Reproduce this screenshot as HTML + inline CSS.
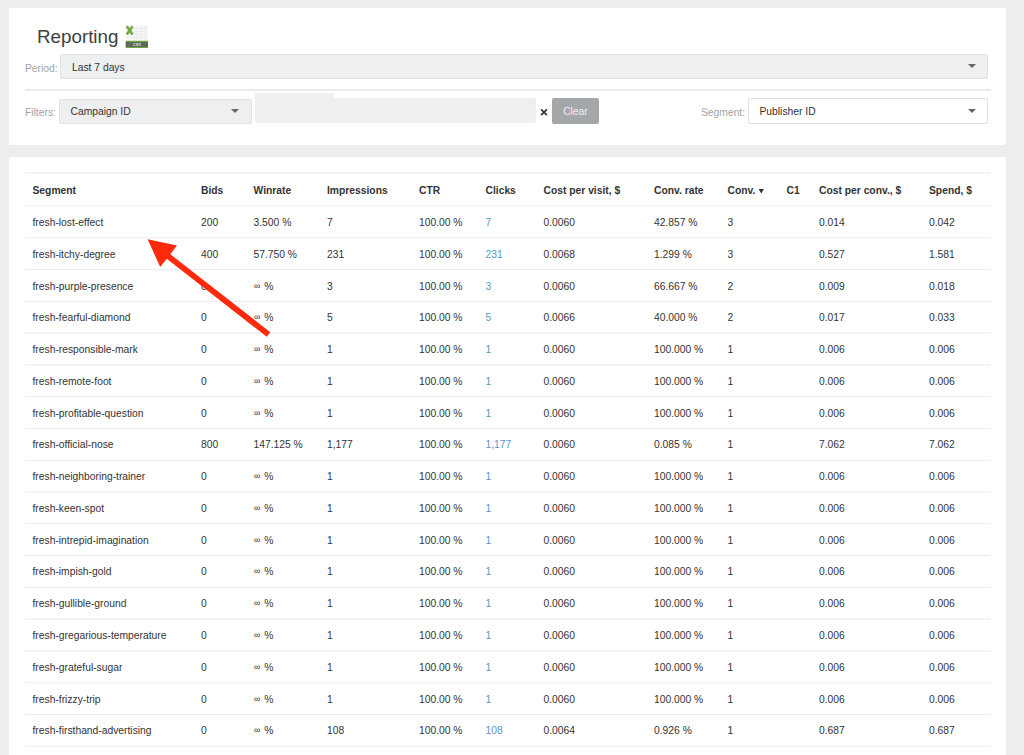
<!DOCTYPE html><html><head><meta charset="utf-8"><style>
*{margin:0;padding:0;box-sizing:border-box}
html,body{width:1024px;height:755px;overflow:hidden}
body{background:#ecedef;font-family:"Liberation Sans",sans-serif;color:#333;position:relative}
.card1{position:absolute;left:9px;top:8px;width:997px;height:137.3px;background:#fff;border-radius:1.5px}
.card2{position:absolute;left:9px;top:156.6px;width:997px;height:620px;background:#fff;border-radius:1.5px}
.title{position:absolute;left:37px;top:26px;font-size:18.8px;color:#3e4042;white-space:nowrap}
.lbl{position:absolute;font-size:10.3px;color:#a3a3a3;white-space:nowrap}
.sel{position:absolute;background:#eeeff1;border:1px solid #dfe2e5;border-radius:2px;font-size:10.3px;color:#333;white-space:nowrap}
.sel span{position:absolute;left:11px;top:0.8px}
.caret{position:absolute;width:0;height:0;border-left:4px solid transparent;border-right:4px solid transparent;border-top:4px solid #666}
.divider{position:absolute;left:25px;top:89px;width:965.5px;height:2px;background:#e9ebec}
.hl{position:absolute;left:24.6px;width:966px;height:1px;background:#eaeced}
.th{position:absolute;font-size:10.3px;font-weight:bold;color:#333;white-space:nowrap}
.td{position:absolute;font-size:10.3px;color:#333;white-space:nowrap}
.td.link{color:#5896c6}
.caret2{display:inline-block;width:0;height:0;border-left:2.7px solid transparent;border-right:2.7px solid transparent;border-top:4.4px solid #333;vertical-align:middle;margin-left:0.3px;position:relative;top:0.5px}
.inf{display:inline-block;width:7.9px;font-size:9px;padding-left:0.6px;position:relative;top:-1px}

</style></head><body>
<div class="card1"></div>
<div class="title">Reporting</div>
<svg style="position:absolute;left:125px;top:25px" width="24" height="24" viewBox="0 0 24 24">
<rect x="0.8" y="0.5" width="22.2" height="22.5" fill="#f5f6f8"/>
<path d="M9 3.5H22.5M9 6.5H22.5M9 9.5H22.5M1 12.5H22.5M12 1V15M16 1V15M20 1V15" stroke="#e2e5e8" stroke-width="0.5"/>
<rect x="0.8" y="15.8" width="22.2" height="7.2" fill="#6aa33a"/>
<rect x="0.8" y="17.2" width="22.2" height="4.6" fill="#5d615e"/>
<path d="M2 22L6 17.2M18 22L22 17.2" stroke="#6aa33a" stroke-width="0.8" opacity="0.7"/>
<text x="12" y="21" font-size="3.9" fill="#e8eee4" text-anchor="middle" font-family="Liberation Sans" font-weight="bold">CSV</text>
<path d="M1.8 1.2 L7.6 9.6 M7.6 1.2 L1.8 9.6" stroke="#72a83e" stroke-width="2.6"/>
</svg>
<div class="lbl" style="left:25px;top:62.5px">Period:</div>
<div class="sel" style="left:60px;top:54px;width:928px;height:25px;line-height:23px"><span>Last 7 days</span></div>
<div class="caret" style="left:968px;top:64px"></div>
<div class="divider"></div>
<div class="lbl" style="left:25px;top:106.8px">Filters:</div>
<div class="sel" style="left:58.5px;top:98.5px;width:193.5px;height:25px;line-height:23px"><span>Campaign ID</span></div>
<div class="caret" style="left:231px;top:109px"></div>
<div style="position:absolute;left:254.7px;top:98.2px;width:281.5px;height:25.2px;background:#eeeff1;border-radius:2px"></div>
<div style="position:absolute;left:255px;top:93px;width:79px;height:10px;background:#eeeff1"></div>
<svg style="position:absolute;left:538px;top:106px" width="12" height="12"><path d="M3.1 3.4L8.9 9.2M8.9 3.4L3.1 9.2" stroke="#333" stroke-width="1.7"/></svg>
<div style="position:absolute;left:551.7px;top:98.3px;width:47.5px;height:25.4px;background:#a4a7aa;border-radius:2px;color:#eef0f1;font-size:10.3px;line-height:27px;text-align:center">Clear</div>
<div class="lbl" style="left:701px;top:107px">Segment:</div>
<div class="sel" style="left:747.5px;top:98.2px;width:240px;height:25.6px;line-height:23px;background:#fff"><span>Publisher ID</span></div>
<div class="caret" style="left:967.6px;top:109px"></div>

<div class="card2"></div>
<svg style="position:absolute;left:0;top:0" width="1024" height="755"><g stroke="#ebedef" stroke-width="1.1"><line x1="24.6" x2="990.6" y1="172.90" y2="172.90"/><line x1="24.6" x2="990.6" y1="206.00" y2="206.00"/><line x1="24.6" x2="990.6" y1="237.78" y2="237.78"/><line x1="24.6" x2="990.6" y1="269.56" y2="269.56"/><line x1="24.6" x2="990.6" y1="301.34" y2="301.34"/><line x1="24.6" x2="990.6" y1="333.12" y2="333.12"/><line x1="24.6" x2="990.6" y1="364.90" y2="364.90"/><line x1="24.6" x2="990.6" y1="396.68" y2="396.68"/><line x1="24.6" x2="990.6" y1="428.46" y2="428.46"/><line x1="24.6" x2="990.6" y1="460.24" y2="460.24"/><line x1="24.6" x2="990.6" y1="492.02" y2="492.02"/><line x1="24.6" x2="990.6" y1="523.80" y2="523.80"/><line x1="24.6" x2="990.6" y1="555.58" y2="555.58"/><line x1="24.6" x2="990.6" y1="587.36" y2="587.36"/><line x1="24.6" x2="990.6" y1="619.14" y2="619.14"/><line x1="24.6" x2="990.6" y1="650.92" y2="650.92"/><line x1="24.6" x2="990.6" y1="682.70" y2="682.70"/><line x1="24.6" x2="990.6" y1="714.48" y2="714.48"/><line x1="24.6" x2="990.6" y1="746.26" y2="746.26"/></g></svg>
<div class="th" style="left:32.5px;top:175px;height:32px;line-height:32px">Segment</div>
<div class="th" style="left:201px;top:175px;height:32px;line-height:32px">Bids</div>
<div class="th" style="left:253.5px;top:175px;height:32px;line-height:32px">Winrate</div>
<div class="th" style="left:327px;top:175px;height:32px;line-height:32px">Impressions</div>
<div class="th" style="left:419px;top:175px;height:32px;line-height:32px">CTR</div>
<div class="th" style="left:485.5px;top:175px;height:32px;line-height:32px">Clicks</div>
<div class="th" style="left:543.5px;top:175px;height:32px;line-height:32px">Cost per visit, $</div>
<div class="th" style="left:654px;top:175px;height:32px;line-height:32px">Conv. rate</div>
<div class="th" style="left:727.5px;top:175px;height:32px;line-height:32px">Conv.</div>
<div class="th" style="left:786.5px;top:175px;height:32px;line-height:32px">C1</div>
<div class="th" style="left:819px;top:175px;height:32px;line-height:32px">Cost per conv., $</div>
<div class="th" style="left:929px;top:175px;height:32px;line-height:32px">Spend, $</div>
<div class="td" style="left:32.5px;top:207.00px;height:31.78px;line-height:31.78px">fresh-lost-effect</div>
<div class="td" style="left:201px;top:207.00px;height:31.78px;line-height:31.78px">200</div>
<div class="td" style="left:253.5px;top:207.00px;height:31.78px;line-height:31.78px">3.500 %</div>
<div class="td" style="left:327px;top:207.00px;height:31.78px;line-height:31.78px">7</div>
<div class="td" style="left:419px;top:207.00px;height:31.78px;line-height:31.78px">100.00 %</div>
<div class="td link" style="left:485.5px;top:207.00px;height:31.78px;line-height:31.78px">7</div>
<div class="td" style="left:543.5px;top:207.00px;height:31.78px;line-height:31.78px">0.0060</div>
<div class="td" style="left:654px;top:207.00px;height:31.78px;line-height:31.78px">42.857 %</div>
<div class="td" style="left:727.5px;top:207.00px;height:31.78px;line-height:31.78px">3</div>
<div class="td" style="left:786.5px;top:207.00px;height:31.78px;line-height:31.78px"></div>
<div class="td" style="left:819px;top:207.00px;height:31.78px;line-height:31.78px">0.014</div>
<div class="td" style="left:929px;top:207.00px;height:31.78px;line-height:31.78px">0.042</div>
<div class="td" style="left:32.5px;top:238.77px;height:31.78px;line-height:31.78px">fresh-itchy-degree</div>
<div class="td" style="left:201px;top:238.77px;height:31.78px;line-height:31.78px">400</div>
<div class="td" style="left:253.5px;top:238.77px;height:31.78px;line-height:31.78px">57.750 %</div>
<div class="td" style="left:327px;top:238.77px;height:31.78px;line-height:31.78px">231</div>
<div class="td" style="left:419px;top:238.77px;height:31.78px;line-height:31.78px">100.00 %</div>
<div class="td link" style="left:485.5px;top:238.77px;height:31.78px;line-height:31.78px">231</div>
<div class="td" style="left:543.5px;top:238.77px;height:31.78px;line-height:31.78px">0.0068</div>
<div class="td" style="left:654px;top:238.77px;height:31.78px;line-height:31.78px">1.299 %</div>
<div class="td" style="left:727.5px;top:238.77px;height:31.78px;line-height:31.78px">3</div>
<div class="td" style="left:786.5px;top:238.77px;height:31.78px;line-height:31.78px"></div>
<div class="td" style="left:819px;top:238.77px;height:31.78px;line-height:31.78px">0.527</div>
<div class="td" style="left:929px;top:238.77px;height:31.78px;line-height:31.78px">1.581</div>
<div class="td" style="left:32.5px;top:270.54px;height:31.78px;line-height:31.78px">fresh-purple-presence</div>
<div class="td" style="left:201px;top:270.54px;height:31.78px;line-height:31.78px">0</div>
<div class="td" style="left:253.5px;top:270.54px;height:31.78px;line-height:31.78px"><span class="inf">∞</span> %</div>
<div class="td" style="left:327px;top:270.54px;height:31.78px;line-height:31.78px">3</div>
<div class="td" style="left:419px;top:270.54px;height:31.78px;line-height:31.78px">100.00 %</div>
<div class="td link" style="left:485.5px;top:270.54px;height:31.78px;line-height:31.78px">3</div>
<div class="td" style="left:543.5px;top:270.54px;height:31.78px;line-height:31.78px">0.0060</div>
<div class="td" style="left:654px;top:270.54px;height:31.78px;line-height:31.78px">66.667 %</div>
<div class="td" style="left:727.5px;top:270.54px;height:31.78px;line-height:31.78px">2</div>
<div class="td" style="left:786.5px;top:270.54px;height:31.78px;line-height:31.78px"></div>
<div class="td" style="left:819px;top:270.54px;height:31.78px;line-height:31.78px">0.009</div>
<div class="td" style="left:929px;top:270.54px;height:31.78px;line-height:31.78px">0.018</div>
<div class="td" style="left:32.5px;top:302.31px;height:31.78px;line-height:31.78px">fresh-fearful-diamond</div>
<div class="td" style="left:201px;top:302.31px;height:31.78px;line-height:31.78px">0</div>
<div class="td" style="left:253.5px;top:302.31px;height:31.78px;line-height:31.78px"><span class="inf">∞</span> %</div>
<div class="td" style="left:327px;top:302.31px;height:31.78px;line-height:31.78px">5</div>
<div class="td" style="left:419px;top:302.31px;height:31.78px;line-height:31.78px">100.00 %</div>
<div class="td link" style="left:485.5px;top:302.31px;height:31.78px;line-height:31.78px">5</div>
<div class="td" style="left:543.5px;top:302.31px;height:31.78px;line-height:31.78px">0.0066</div>
<div class="td" style="left:654px;top:302.31px;height:31.78px;line-height:31.78px">40.000 %</div>
<div class="td" style="left:727.5px;top:302.31px;height:31.78px;line-height:31.78px">2</div>
<div class="td" style="left:786.5px;top:302.31px;height:31.78px;line-height:31.78px"></div>
<div class="td" style="left:819px;top:302.31px;height:31.78px;line-height:31.78px">0.017</div>
<div class="td" style="left:929px;top:302.31px;height:31.78px;line-height:31.78px">0.033</div>
<div class="td" style="left:32.5px;top:334.08px;height:31.78px;line-height:31.78px">fresh-responsible-mark</div>
<div class="td" style="left:201px;top:334.08px;height:31.78px;line-height:31.78px">0</div>
<div class="td" style="left:253.5px;top:334.08px;height:31.78px;line-height:31.78px"><span class="inf">∞</span> %</div>
<div class="td" style="left:327px;top:334.08px;height:31.78px;line-height:31.78px">1</div>
<div class="td" style="left:419px;top:334.08px;height:31.78px;line-height:31.78px">100.00 %</div>
<div class="td link" style="left:485.5px;top:334.08px;height:31.78px;line-height:31.78px">1</div>
<div class="td" style="left:543.5px;top:334.08px;height:31.78px;line-height:31.78px">0.0060</div>
<div class="td" style="left:654px;top:334.08px;height:31.78px;line-height:31.78px">100.000 %</div>
<div class="td" style="left:727.5px;top:334.08px;height:31.78px;line-height:31.78px">1</div>
<div class="td" style="left:786.5px;top:334.08px;height:31.78px;line-height:31.78px"></div>
<div class="td" style="left:819px;top:334.08px;height:31.78px;line-height:31.78px">0.006</div>
<div class="td" style="left:929px;top:334.08px;height:31.78px;line-height:31.78px">0.006</div>
<div class="td" style="left:32.5px;top:365.85px;height:31.78px;line-height:31.78px">fresh-remote-foot</div>
<div class="td" style="left:201px;top:365.85px;height:31.78px;line-height:31.78px">0</div>
<div class="td" style="left:253.5px;top:365.85px;height:31.78px;line-height:31.78px"><span class="inf">∞</span> %</div>
<div class="td" style="left:327px;top:365.85px;height:31.78px;line-height:31.78px">1</div>
<div class="td" style="left:419px;top:365.85px;height:31.78px;line-height:31.78px">100.00 %</div>
<div class="td link" style="left:485.5px;top:365.85px;height:31.78px;line-height:31.78px">1</div>
<div class="td" style="left:543.5px;top:365.85px;height:31.78px;line-height:31.78px">0.0060</div>
<div class="td" style="left:654px;top:365.85px;height:31.78px;line-height:31.78px">100.000 %</div>
<div class="td" style="left:727.5px;top:365.85px;height:31.78px;line-height:31.78px">1</div>
<div class="td" style="left:786.5px;top:365.85px;height:31.78px;line-height:31.78px"></div>
<div class="td" style="left:819px;top:365.85px;height:31.78px;line-height:31.78px">0.006</div>
<div class="td" style="left:929px;top:365.85px;height:31.78px;line-height:31.78px">0.006</div>
<div class="td" style="left:32.5px;top:397.62px;height:31.78px;line-height:31.78px">fresh-profitable-question</div>
<div class="td" style="left:201px;top:397.62px;height:31.78px;line-height:31.78px">0</div>
<div class="td" style="left:253.5px;top:397.62px;height:31.78px;line-height:31.78px"><span class="inf">∞</span> %</div>
<div class="td" style="left:327px;top:397.62px;height:31.78px;line-height:31.78px">1</div>
<div class="td" style="left:419px;top:397.62px;height:31.78px;line-height:31.78px">100.00 %</div>
<div class="td link" style="left:485.5px;top:397.62px;height:31.78px;line-height:31.78px">1</div>
<div class="td" style="left:543.5px;top:397.62px;height:31.78px;line-height:31.78px">0.0060</div>
<div class="td" style="left:654px;top:397.62px;height:31.78px;line-height:31.78px">100.000 %</div>
<div class="td" style="left:727.5px;top:397.62px;height:31.78px;line-height:31.78px">1</div>
<div class="td" style="left:786.5px;top:397.62px;height:31.78px;line-height:31.78px"></div>
<div class="td" style="left:819px;top:397.62px;height:31.78px;line-height:31.78px">0.006</div>
<div class="td" style="left:929px;top:397.62px;height:31.78px;line-height:31.78px">0.006</div>
<div class="td" style="left:32.5px;top:429.39px;height:31.78px;line-height:31.78px">fresh-official-nose</div>
<div class="td" style="left:201px;top:429.39px;height:31.78px;line-height:31.78px">800</div>
<div class="td" style="left:253.5px;top:429.39px;height:31.78px;line-height:31.78px">147.125 %</div>
<div class="td" style="left:327px;top:429.39px;height:31.78px;line-height:31.78px">1,177</div>
<div class="td" style="left:419px;top:429.39px;height:31.78px;line-height:31.78px">100.00 %</div>
<div class="td link" style="left:485.5px;top:429.39px;height:31.78px;line-height:31.78px">1,177</div>
<div class="td" style="left:543.5px;top:429.39px;height:31.78px;line-height:31.78px">0.0060</div>
<div class="td" style="left:654px;top:429.39px;height:31.78px;line-height:31.78px">0.085 %</div>
<div class="td" style="left:727.5px;top:429.39px;height:31.78px;line-height:31.78px">1</div>
<div class="td" style="left:786.5px;top:429.39px;height:31.78px;line-height:31.78px"></div>
<div class="td" style="left:819px;top:429.39px;height:31.78px;line-height:31.78px">7.062</div>
<div class="td" style="left:929px;top:429.39px;height:31.78px;line-height:31.78px">7.062</div>
<div class="td" style="left:32.5px;top:461.16px;height:31.78px;line-height:31.78px">fresh-neighboring-trainer</div>
<div class="td" style="left:201px;top:461.16px;height:31.78px;line-height:31.78px">0</div>
<div class="td" style="left:253.5px;top:461.16px;height:31.78px;line-height:31.78px"><span class="inf">∞</span> %</div>
<div class="td" style="left:327px;top:461.16px;height:31.78px;line-height:31.78px">1</div>
<div class="td" style="left:419px;top:461.16px;height:31.78px;line-height:31.78px">100.00 %</div>
<div class="td link" style="left:485.5px;top:461.16px;height:31.78px;line-height:31.78px">1</div>
<div class="td" style="left:543.5px;top:461.16px;height:31.78px;line-height:31.78px">0.0060</div>
<div class="td" style="left:654px;top:461.16px;height:31.78px;line-height:31.78px">100.000 %</div>
<div class="td" style="left:727.5px;top:461.16px;height:31.78px;line-height:31.78px">1</div>
<div class="td" style="left:786.5px;top:461.16px;height:31.78px;line-height:31.78px"></div>
<div class="td" style="left:819px;top:461.16px;height:31.78px;line-height:31.78px">0.006</div>
<div class="td" style="left:929px;top:461.16px;height:31.78px;line-height:31.78px">0.006</div>
<div class="td" style="left:32.5px;top:492.93px;height:31.78px;line-height:31.78px">fresh-keen-spot</div>
<div class="td" style="left:201px;top:492.93px;height:31.78px;line-height:31.78px">0</div>
<div class="td" style="left:253.5px;top:492.93px;height:31.78px;line-height:31.78px"><span class="inf">∞</span> %</div>
<div class="td" style="left:327px;top:492.93px;height:31.78px;line-height:31.78px">1</div>
<div class="td" style="left:419px;top:492.93px;height:31.78px;line-height:31.78px">100.00 %</div>
<div class="td link" style="left:485.5px;top:492.93px;height:31.78px;line-height:31.78px">1</div>
<div class="td" style="left:543.5px;top:492.93px;height:31.78px;line-height:31.78px">0.0060</div>
<div class="td" style="left:654px;top:492.93px;height:31.78px;line-height:31.78px">100.000 %</div>
<div class="td" style="left:727.5px;top:492.93px;height:31.78px;line-height:31.78px">1</div>
<div class="td" style="left:786.5px;top:492.93px;height:31.78px;line-height:31.78px"></div>
<div class="td" style="left:819px;top:492.93px;height:31.78px;line-height:31.78px">0.006</div>
<div class="td" style="left:929px;top:492.93px;height:31.78px;line-height:31.78px">0.006</div>
<div class="td" style="left:32.5px;top:524.70px;height:31.78px;line-height:31.78px">fresh-intrepid-imagination</div>
<div class="td" style="left:201px;top:524.70px;height:31.78px;line-height:31.78px">0</div>
<div class="td" style="left:253.5px;top:524.70px;height:31.78px;line-height:31.78px"><span class="inf">∞</span> %</div>
<div class="td" style="left:327px;top:524.70px;height:31.78px;line-height:31.78px">1</div>
<div class="td" style="left:419px;top:524.70px;height:31.78px;line-height:31.78px">100.00 %</div>
<div class="td link" style="left:485.5px;top:524.70px;height:31.78px;line-height:31.78px">1</div>
<div class="td" style="left:543.5px;top:524.70px;height:31.78px;line-height:31.78px">0.0060</div>
<div class="td" style="left:654px;top:524.70px;height:31.78px;line-height:31.78px">100.000 %</div>
<div class="td" style="left:727.5px;top:524.70px;height:31.78px;line-height:31.78px">1</div>
<div class="td" style="left:786.5px;top:524.70px;height:31.78px;line-height:31.78px"></div>
<div class="td" style="left:819px;top:524.70px;height:31.78px;line-height:31.78px">0.006</div>
<div class="td" style="left:929px;top:524.70px;height:31.78px;line-height:31.78px">0.006</div>
<div class="td" style="left:32.5px;top:556.47px;height:31.78px;line-height:31.78px">fresh-impish-gold</div>
<div class="td" style="left:201px;top:556.47px;height:31.78px;line-height:31.78px">0</div>
<div class="td" style="left:253.5px;top:556.47px;height:31.78px;line-height:31.78px"><span class="inf">∞</span> %</div>
<div class="td" style="left:327px;top:556.47px;height:31.78px;line-height:31.78px">1</div>
<div class="td" style="left:419px;top:556.47px;height:31.78px;line-height:31.78px">100.00 %</div>
<div class="td link" style="left:485.5px;top:556.47px;height:31.78px;line-height:31.78px">1</div>
<div class="td" style="left:543.5px;top:556.47px;height:31.78px;line-height:31.78px">0.0060</div>
<div class="td" style="left:654px;top:556.47px;height:31.78px;line-height:31.78px">100.000 %</div>
<div class="td" style="left:727.5px;top:556.47px;height:31.78px;line-height:31.78px">1</div>
<div class="td" style="left:786.5px;top:556.47px;height:31.78px;line-height:31.78px"></div>
<div class="td" style="left:819px;top:556.47px;height:31.78px;line-height:31.78px">0.006</div>
<div class="td" style="left:929px;top:556.47px;height:31.78px;line-height:31.78px">0.006</div>
<div class="td" style="left:32.5px;top:588.24px;height:31.78px;line-height:31.78px">fresh-gullible-ground</div>
<div class="td" style="left:201px;top:588.24px;height:31.78px;line-height:31.78px">0</div>
<div class="td" style="left:253.5px;top:588.24px;height:31.78px;line-height:31.78px"><span class="inf">∞</span> %</div>
<div class="td" style="left:327px;top:588.24px;height:31.78px;line-height:31.78px">1</div>
<div class="td" style="left:419px;top:588.24px;height:31.78px;line-height:31.78px">100.00 %</div>
<div class="td link" style="left:485.5px;top:588.24px;height:31.78px;line-height:31.78px">1</div>
<div class="td" style="left:543.5px;top:588.24px;height:31.78px;line-height:31.78px">0.0060</div>
<div class="td" style="left:654px;top:588.24px;height:31.78px;line-height:31.78px">100.000 %</div>
<div class="td" style="left:727.5px;top:588.24px;height:31.78px;line-height:31.78px">1</div>
<div class="td" style="left:786.5px;top:588.24px;height:31.78px;line-height:31.78px"></div>
<div class="td" style="left:819px;top:588.24px;height:31.78px;line-height:31.78px">0.006</div>
<div class="td" style="left:929px;top:588.24px;height:31.78px;line-height:31.78px">0.006</div>
<div class="td" style="left:32.5px;top:620.01px;height:31.78px;line-height:31.78px">fresh-gregarious-temperature</div>
<div class="td" style="left:201px;top:620.01px;height:31.78px;line-height:31.78px">0</div>
<div class="td" style="left:253.5px;top:620.01px;height:31.78px;line-height:31.78px"><span class="inf">∞</span> %</div>
<div class="td" style="left:327px;top:620.01px;height:31.78px;line-height:31.78px">1</div>
<div class="td" style="left:419px;top:620.01px;height:31.78px;line-height:31.78px">100.00 %</div>
<div class="td link" style="left:485.5px;top:620.01px;height:31.78px;line-height:31.78px">1</div>
<div class="td" style="left:543.5px;top:620.01px;height:31.78px;line-height:31.78px">0.0060</div>
<div class="td" style="left:654px;top:620.01px;height:31.78px;line-height:31.78px">100.000 %</div>
<div class="td" style="left:727.5px;top:620.01px;height:31.78px;line-height:31.78px">1</div>
<div class="td" style="left:786.5px;top:620.01px;height:31.78px;line-height:31.78px"></div>
<div class="td" style="left:819px;top:620.01px;height:31.78px;line-height:31.78px">0.006</div>
<div class="td" style="left:929px;top:620.01px;height:31.78px;line-height:31.78px">0.006</div>
<div class="td" style="left:32.5px;top:651.78px;height:31.78px;line-height:31.78px">fresh-grateful-sugar</div>
<div class="td" style="left:201px;top:651.78px;height:31.78px;line-height:31.78px">0</div>
<div class="td" style="left:253.5px;top:651.78px;height:31.78px;line-height:31.78px"><span class="inf">∞</span> %</div>
<div class="td" style="left:327px;top:651.78px;height:31.78px;line-height:31.78px">1</div>
<div class="td" style="left:419px;top:651.78px;height:31.78px;line-height:31.78px">100.00 %</div>
<div class="td link" style="left:485.5px;top:651.78px;height:31.78px;line-height:31.78px">1</div>
<div class="td" style="left:543.5px;top:651.78px;height:31.78px;line-height:31.78px">0.0060</div>
<div class="td" style="left:654px;top:651.78px;height:31.78px;line-height:31.78px">100.000 %</div>
<div class="td" style="left:727.5px;top:651.78px;height:31.78px;line-height:31.78px">1</div>
<div class="td" style="left:786.5px;top:651.78px;height:31.78px;line-height:31.78px"></div>
<div class="td" style="left:819px;top:651.78px;height:31.78px;line-height:31.78px">0.006</div>
<div class="td" style="left:929px;top:651.78px;height:31.78px;line-height:31.78px">0.006</div>
<div class="td" style="left:32.5px;top:683.55px;height:31.78px;line-height:31.78px">fresh-frizzy-trip</div>
<div class="td" style="left:201px;top:683.55px;height:31.78px;line-height:31.78px">0</div>
<div class="td" style="left:253.5px;top:683.55px;height:31.78px;line-height:31.78px"><span class="inf">∞</span> %</div>
<div class="td" style="left:327px;top:683.55px;height:31.78px;line-height:31.78px">1</div>
<div class="td" style="left:419px;top:683.55px;height:31.78px;line-height:31.78px">100.00 %</div>
<div class="td link" style="left:485.5px;top:683.55px;height:31.78px;line-height:31.78px">1</div>
<div class="td" style="left:543.5px;top:683.55px;height:31.78px;line-height:31.78px">0.0060</div>
<div class="td" style="left:654px;top:683.55px;height:31.78px;line-height:31.78px">100.000 %</div>
<div class="td" style="left:727.5px;top:683.55px;height:31.78px;line-height:31.78px">1</div>
<div class="td" style="left:786.5px;top:683.55px;height:31.78px;line-height:31.78px"></div>
<div class="td" style="left:819px;top:683.55px;height:31.78px;line-height:31.78px">0.006</div>
<div class="td" style="left:929px;top:683.55px;height:31.78px;line-height:31.78px">0.006</div>
<div class="td" style="left:32.5px;top:715.32px;height:31.78px;line-height:31.78px">fresh-firsthand-advertising</div>
<div class="td" style="left:201px;top:715.32px;height:31.78px;line-height:31.78px">0</div>
<div class="td" style="left:253.5px;top:715.32px;height:31.78px;line-height:31.78px"><span class="inf">∞</span> %</div>
<div class="td" style="left:327px;top:715.32px;height:31.78px;line-height:31.78px">108</div>
<div class="td" style="left:419px;top:715.32px;height:31.78px;line-height:31.78px">100.00 %</div>
<div class="td link" style="left:485.5px;top:715.32px;height:31.78px;line-height:31.78px">108</div>
<div class="td" style="left:543.5px;top:715.32px;height:31.78px;line-height:31.78px">0.0064</div>
<div class="td" style="left:654px;top:715.32px;height:31.78px;line-height:31.78px">0.926 %</div>
<div class="td" style="left:727.5px;top:715.32px;height:31.78px;line-height:31.78px">1</div>
<div class="td" style="left:786.5px;top:715.32px;height:31.78px;line-height:31.78px"></div>
<div class="td" style="left:819px;top:715.32px;height:31.78px;line-height:31.78px">0.687</div>
<div class="td" style="left:929px;top:715.32px;height:31.78px;line-height:31.78px">0.687</div>
<svg style="position:absolute;left:757px;top:187px" width="10" height="10"><polygon points="1.6,2 6.9,2 4.25,6.4" fill="#333"/></svg>
<svg style="position:absolute;left:0;top:0" width="1024" height="755">
<line x1="268.5" y1="334.5" x2="164" y2="253" stroke="#ff2a0c" stroke-width="5.8"/>
<polygon points="147.6,239.3 177,245.6 160.2,267" fill="#ff2a0c"/>
</svg>

</body></html>
